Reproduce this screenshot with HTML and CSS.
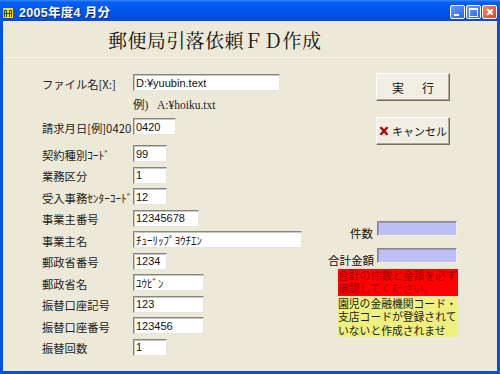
FILE: index.html
```html
<!DOCTYPE html>
<html lang="ja">
<head>
  <meta charset="UTF-8" />
  <title>郵便局引落依頼ＦＤ作成</title>
  <link rel="stylesheet" href="styles.css">
</head>
<body>
  <div class="window">
    <div class="titlebar">
      <svg class="app-icon" width="10" height="10" viewBox="0 0 10 10">
        <rect x="0" y="0" width="10" height="10" fill="#f4e000"/>
        <path d="M1 2h3v7H3V3H2v6H1z M6 2h3v7H8V3H7v6H6z" fill="#3a4a10"/>
        <rect x="1" y="5" width="8" height="1" fill="#3a4a10"/>
      </svg>
      <span class="title">2005年度4 月分</span>
      <div class="controls">
        <span class="ctl min"></span>
        <span class="ctl max"></span>
        <span class="ctl close"></span>
      </div>
    </div>

    <div class="client">
      <h1>郵便局引落依頼ＦＤ作成</h1>
      <div class="sep"></div>

      <div class="body">
        <div class="form">
          <div class="row top"><label>ファイル名[X:]</label><input class="w-file" value="D:¥yuubin.text" readonly></div>
          <div class="row hint"><span class="sample">例)&nbsp;&nbsp;&nbsp;A:¥hoiku.txt</span></div>
          <div class="row r-date"><label>請求月日[例]0420</label><input class="w-date" value="0420" readonly></div>
          <div class="row r-gap"><label>契約種別ｺｰﾄﾞ</label><input class="w-xs" value="99" readonly></div>
          <div class="row"><label>業務区分</label><input class="w-xs" value="1" readonly></div>
          <div class="row"><label>受入事務ｾﾝﾀｰｺｰﾄﾞ</label><input class="w-xs" value="12" readonly></div>
          <div class="row"><label>事業主番号</label><input class="w-md" value="12345678" readonly></div>
          <div class="row"><label>事業主名</label><input class="w-lg" value="ﾁｭｰﾘｯﾌﾟﾖｳﾁｴﾝ" readonly></div>
          <div class="row"><label>郵政省番号</label><input class="w-xs" value="1234" readonly></div>
          <div class="row"><label>郵政省名</label><input class="w-sm" value="ﾕｳﾋﾞﾝ" readonly></div>
          <div class="row"><label>振替口座記号</label><input class="w-sm" value="123" readonly></div>
          <div class="row"><label>振替口座番号</label><input class="w-sm" value="123456" readonly></div>
          <div class="row"><label>振替回数</label><input class="w-xs" value="1" readonly></div>
        </div>

        <div class="side">
          <button class="btn run">実<span class="sp"></span>行</button>
          <button class="btn cancel">
            <svg width="10" height="10" viewBox="0 0 10 10">
              <path d="M0.5 1.8L2.4 0.4 5 3.3 7.6 0.4 9.5 1.8 6.6 5 9.5 8.2 7.6 9.6 5 6.7 2.4 9.6 0.5 8.2 3.4 5z" fill="#b80000"/>
            </svg>キャンセル
          </button>

          <div class="total first"><span>件数</span><input class="sum" readonly></div>
          <div class="total"><span>合計金額</span><input class="sum" readonly></div>

          <div class="note red">
            <div class="ln">合計の件数と金額を必ず</div>
            <div class="ln">確認してください。</div>
          </div>
          <div class="note yellow">
            <div class="ln">園児の金融機関コード・</div>
            <div class="ln">支店コードが登録されて</div>
            <div class="ln">いないと作成されませ</div>
          </div>
        </div>
      </div>
    </div>
  </div>
</body>
</html>
```

FILE: styles.css
```css
body {
  margin: 0;
  background: #ece9d8;
}
.window {
  width: 500px;
  height: 374px;
  display: flex;
  flex-direction: column;
  background: #0751e0;
}
.titlebar {
  height: 21px;
  flex: none;
  display: flex;
  align-items: center;
  padding-top: 2px;
  box-sizing: border-box;
  background: linear-gradient(#3c8cf8 0, #0a5ef0 2px, #0058ee 40%, #0050e4 80%, #0a48d2 100%);
}
.app-icon {
  margin-left: 3px;
  margin-top: 2px;
}
.title {
  margin-left: 6px;
  font-family: "Liberation Sans", "Noto Sans CJK JP", sans-serif;
  font-size: 12.5px;
  font-weight: bold;
  letter-spacing: 0.3px;
  color: #fff;
  text-shadow: 1px 1px 0 #0a2a80;
}
.controls {
  margin-left: auto;
  margin-right: 3px;
  display: flex;
  gap: 1px;
}
.ctl {
  position: relative;
  width: 15px;
  height: 14px;
  box-sizing: border-box;
  border: 1px solid #fff;
  border-radius: 2px;
  background: linear-gradient(135deg, #6c9cf8, #2a64e8);
}
.ctl.min::after {
  content: "";
  position: absolute;
  left: 3px;
  bottom: 2px;
  width: 5px;
  height: 2px;
  background: #fff;
}
.ctl.max::after {
  content: "";
  position: absolute;
  left: 2px;
  top: 2px;
  width: 7px;
  height: 6px;
  border: 1px solid #fff;
  border-top-width: 2px;
}
.ctl.close {
  background: linear-gradient(135deg, #f08a68, #d84220);
}
.ctl.close::before,
.ctl.close::after {
  content: "";
  position: absolute;
  left: 6px;
  top: 2px;
  width: 1.6px;
  height: 8px;
  background: #fff;
  transform: rotate(45deg);
}
.ctl.close::after {
  transform: rotate(-45deg);
}

.client {
  flex: 1;
  margin: 0 3px 3px 3px;
  background: #ece9d8;
  font-family: "Noto Sans CJK JP", sans-serif;
  color: #111;
}
h1 {
  margin: 7px 0 0 105px;
  height: 24px;
  line-height: 24px;
  font-family: "Noto Serif CJK JP", "Noto Sans CJK JP", serif;
  font-size: 19px;
  font-weight: normal;
  letter-spacing: 0.4px;
}
.sep {
  margin-top: 5px;
  height: 1px;
  background: #f6f4ec;
}
.body {
  display: flex;
}

.form {
  width: 325px;
  padding-left: 39px;
  box-sizing: border-box;
}
.row {
  display: flex;
  align-items: center;
  height: 17px;
  margin-top: 4.5px;
}
.row.top {
  margin-top: 16px;
}
.row.hint {
  margin-top: 4px;
  padding-left: 91px;
}
.row.r-date {
  margin-top: 6px;
}
.row.r-gap {
  margin-top: 10px;
}
label {
  width: 91px;
  flex: none;
  font-size: 11.3px;
  padding-top: 2px;
  white-space: nowrap;
  color: #222;
}
.sample {
  font-family: "Liberation Serif", "Noto Sans CJK JP", serif;
  font-size: 11.5px;
  color: #222;
}
input {
  height: 17px;
  box-sizing: border-box;
  padding: 0 2px;
  margin: 0;
  border: 1px solid;
  border-color: #858585 #e4e4e4 #e4e4e4 #858585;
  box-shadow: inset 1px 1px 0 #c8c5b8;
  background: #fff;
  font-family: "Liberation Sans", "Noto Sans CJK JP", sans-serif;
  font-size: 11px;
  color: #111;
  outline: none;
}
.w-file { width: 147px; }
.w-date { width: 43px; }
.w-xs { width: 34px; }
.w-sm { width: 71px; }
.w-md { width: 66px; }
.w-lg { width: 169px; }

.side {
  width: 169px;
  display: flex;
  flex-direction: column;
}
.btn {
  width: 74px;
  height: 28px;
  margin-left: 48px;
  padding: 0;
  display: flex;
  align-items: center;
  justify-content: center;
  border: 1px solid;
  border-color: #fff #716f64 #716f64 #fff;
  box-shadow: inset -1px -1px 0 #aca899;
  background: #f1efe4;
  font-family: "Noto Sans CJK JP", sans-serif;
  font-size: 12px;
  color: #111;
}
.btn.run {
  margin-top: 15px;
}
.btn .sp {
  display: inline-block;
  width: 18px;
}
.btn.cancel {
  margin-top: 16px;
  font-size: 11px;
  gap: 3px;
}
.total {
  display: flex;
  align-items: flex-end;
  height: 15px;
  margin-top: 12px;
}
.total.first {
  margin-top: 76px;
}
.total span {
  width: 45px;
  text-align: right;
  margin-right: 4px;
  margin-bottom: -4px;
  line-height: 14px;
  font-size: 11.5px;
  white-space: nowrap;
}
.sum {
  width: 80px;
  height: 15px;
  background: #bfbff8;
  border-color: #888 #f0f0f0 #f0f0f0 #888;
  box-shadow: inset 1px 1px 0 #9a9ab8;
}
.note {
  width: 120px;
  margin-left: 10px;
  font-size: 10.8px;
  white-space: nowrap;
}
.note .ln {
  height: 13.3px;
  line-height: 13.3px;
}
.note.red {
  margin-top: 6px;
  height: 27px;
  background: #ff0000;
  color: #a00000;
}
.note.yellow {
  margin-top: 1px;
  height: 40px;
  background: #f0f080;
  color: #222;
}
```
